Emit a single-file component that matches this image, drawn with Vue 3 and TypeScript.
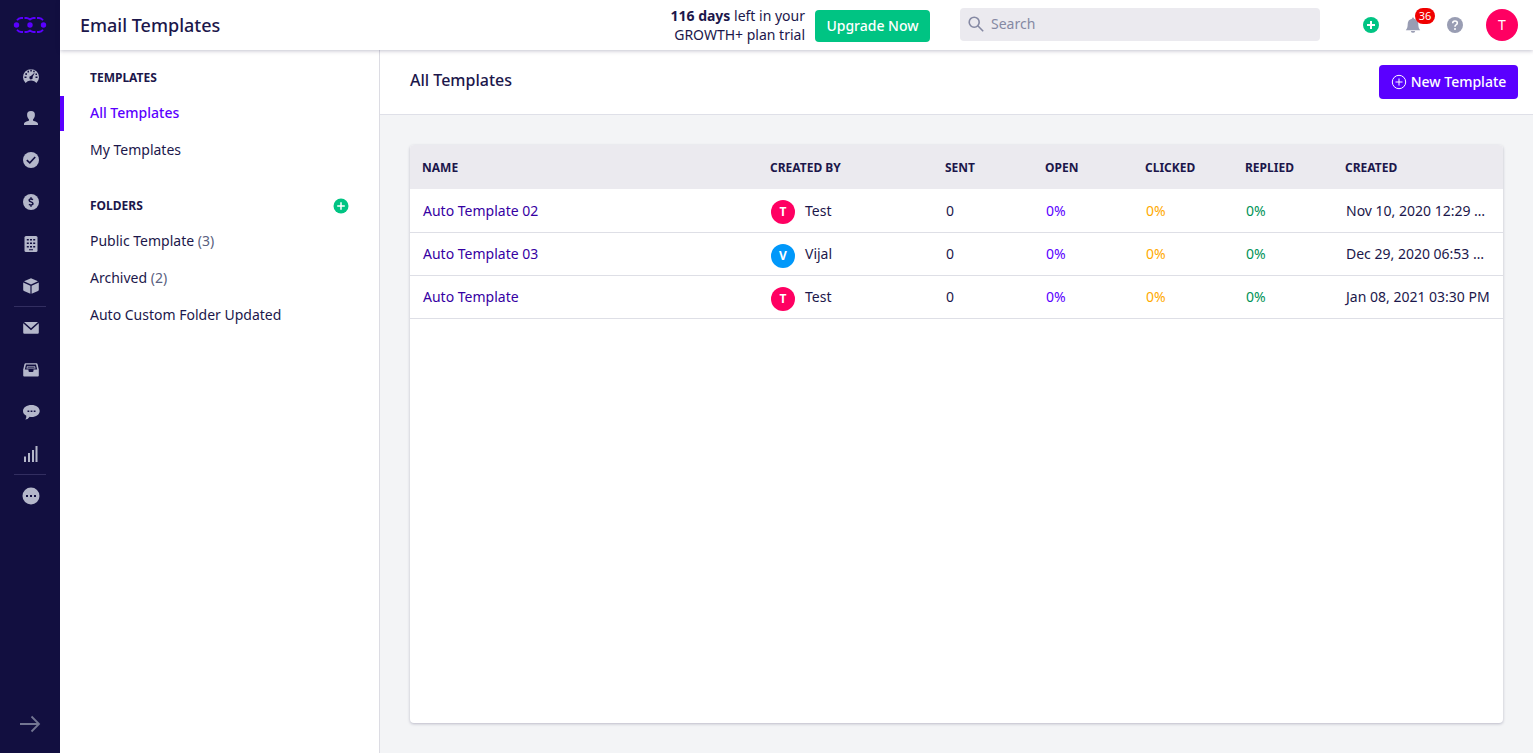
<script setup lang="ts">
import { ref } from 'vue'

interface Row {
  name: string
  initial: string
  owner: string
  tone: 'pink' | 'blue'
  created: string
}

const navItems: { id: string; label: string; divided?: boolean }[] = [
  { id: 'gauge', label: 'Dashboard' },
  { id: 'person', label: 'Contacts' },
  { id: 'check', label: 'Tasks' },
  { id: 'dollar', label: 'Deals' },
  { id: 'building', label: 'Companies' },
  { id: 'box', label: 'Products', divided: true },
  { id: 'mail', label: 'Emails' },
  { id: 'inbox', label: 'Inbox' },
  { id: 'chat', label: 'Conversations' },
  { id: 'chart', label: 'Reports', divided: true },
  { id: 'more', label: 'More' },
]

const folders: { name: string; count?: number }[] = [
  { name: 'Public Template', count: 3 },
  { name: 'Archived', count: 2 },
  { name: 'Auto Custom Folder Updated' },
]

const rows: Row[] = [
  { name: 'Auto Template 02', initial: 'T', owner: 'Test', tone: 'pink', created: 'Nov 10, 2020 12:29 …' },
  { name: 'Auto Template 03', initial: 'V', owner: 'Vijal', tone: 'blue', created: 'Dec 29, 2020 06:53 …' },
  { name: 'Auto Template', initial: 'T', owner: 'Test', tone: 'pink', created: 'Jan 08, 2021 03:30 PM' },
]

const search = ref('')
</script>

<template>
  <div class="app">
    <nav class="rail" aria-label="Main">
      <a class="logo" href="#" aria-label="Home">
        <svg width="34" height="18" viewBox="0 0 34 18" fill="none" stroke="#5a00ff" stroke-width="1.800">
          <path d="M4 4.200Q5.500 2 8 2h2M11.500 2h2q1.500 0 3.500 1.500Q19 2 20.500 2h2M24 2h2q2.500 0 4 2.200M4 13.800Q5.500 16 8 16h2M11.500 16h2q1.500 0 3.500-1.500Q19 16 20.500 16h2M24 16h2q2.500 0 4-2.200" />
          <g fill="#5a00ff" stroke="none"><circle cx="3.500" cy="9" r="2.700" /><circle cx="17" cy="9" r="2.700" /><circle cx="30.500" cy="9" r="2.700" /></g>
        </svg>
      </a>
      <a v-for="item in navItems" :key="item.id" class="rail-item" :class="{ divided: item.divided }" href="#" :aria-label="item.label">
        <svg width="18" height="18" viewBox="0 0 18 18" fill="#b4b7ca">
          <template v-if="item.id === 'gauge'">
            <path d="M3.500 16A8 8 0 1 1 14.500 16L12.300 14.200Q9 12.800 5.700 14.200Z" />
            <g fill="#120f40"><rect x="2.500" y="9.500" width="2" height="1.500" /><rect x="3.300" y="6.200" width="1.700" height="1.700" /><rect x="5.500" y="3.700" width="1.500" height="1.800" /><rect x="8.300" y="2.700" width="1.500" height="1.800" /><rect x="11.200" y="3.700" width="1.500" height="1.500" /><rect x="13.500" y="9.500" width="2" height="1.500" /><rect x="13.500" y="6.500" width="1.500" height="1.500" /><path d="M12.800 5.500L10.600 10a1.700 1.700 0 1 1-1.700-1Z" /></g>
          </template>
          <path v-else-if="item.id === 'person'" d="M9 2C6.300 2 4.900 3.500 5.100 6c.1 2 .8 3.400 1.900 4.400v1.200c-.5.800-4.800.900-5 3.400v.900h14V15c-.2-2.500-4.500-2.600-5-3.400v-1.200c1.100-1 1.800-2.400 1.900-4.400C13.100 3.500 11.700 2 9 2Z" />
          <template v-else-if="item.id === 'check'">
            <circle cx="9" cy="9" r="8" /><path d="M4.800 9.200l3 2.700L13.200 6" fill="none" stroke="#120f40" stroke-width="1.600" />
          </template>
          <template v-else-if="item.id === 'dollar'">
            <circle cx="9" cy="9" r="8" /><path d="M11 6.700Q9.200 5.500 7.900 6.200C6.500 7 7.200 8.400 9 8.900c2 .6 2.600 2.100 1.200 2.800Q8.800 12.400 6.900 11.300M9 4.300v1.700M9 12v1.800" fill="none" stroke="#120f40" stroke-width="1.500" />
          </template>
          <template v-else-if="item.id === 'building'">
            <rect x="2.500" y="1" width="13" height="16" rx="1.500" />
            <path d="M4.800 4h2v1.500h-2zM8 4h2v1.500H8zM11.200 4h2v1.500h-2zM4.800 7.500h2V9h-2zM8 7.500h2V9H8zM11.200 7.500h2V9h-2zM4.800 11h2v1.500h-2zM8 11h2v1.500H8zM11.200 11h2v1.500h-2zM7 14.200h4v1H7z" fill="#120f40" />
          </template>
          <path v-else-if="item.id === 'box'" d="M9 1.200l7 3.100-7 3.300-7-3.300ZM1.200 5.400l7.200 3.400v8l-6.400-2.900q-.8-.4-.8-1.200ZM16.800 5.400L9.600 8.800v8l6.400-2.900q.8-.4.8-1.200Z" />
          <path v-else-if="item.id === 'mail'" d="M2 3h14L9 9.300ZM1.200 4.200L9 11.300l7.800-7.100v9.400q0 1.200-1.200 1.200H2.400q-1.200 0-1.200-1.200Z" />
          <template v-else-if="item.id === 'inbox'">
            <path d="M3.500 2.200h11q.8 0 1 .8l1.300 5.500v6q0 1-1 1H2.200q-1 0-1-1v-6L2.500 3q.2-.8 1-.8Z" /><path d="M4 3.600h10l1.200 5H11.500v1.200q0 1.200-1.200 1.200H7.700q-1.200 0-1.200-1.200V8.600H2.800Z" fill="#120f40" /><path d="M5 5.200h8l.6 2.200H4.400Z" /><path d="M5.500 6.300h7" stroke="#120f40" stroke-width=".8" />
          </template>
          <template v-else-if="item.id === 'chat'">
            <path d="M9.500 2c4.700 0 8.200 2.600 8.200 6s-3.500 6-8.200 6q-1 0-1.800-.2Q6 16.500 3.300 16.500q1.300-1.500 1-3.800Q1 11 1 8c0-3.400 3.700-6 8.500-6Z" /><path d="M5.500 7.500h1.800v1.600H5.500zM8.600 7.500h1.800v1.600H8.600zM11.700 7.500h1.800v1.600h-1.800z" fill="#120f40" />
          </template>
          <path v-else-if="item.id === 'chart'" d="M2 11.500h2V17H2zM6 8h2v9H6zM10 5h2v12h-2zM13.500 1h2v16h-2z" />
          <template v-else>
            <circle cx="9" cy="9" r="8.500" /><path d="M4 8h2v2H4zM8 8h2v2H8zM12 8h2v2h-2z" fill="#120f40" />
          </template>
        </svg>
      </a>
      <button class="expand" type="button" aria-label="Expand menu">
        <svg width="22" height="18" viewBox="0 0 22 18" fill="none" stroke="#737692" stroke-width="1.800"><path d="M1 9h19M12.500 1.500L20 9l-7.500 7.500" /></svg>
      </button>
    </nav>

    <div class="shell">
      <header class="topbar">
        <h1>Email Templates</h1>
        <p class="trial"><strong>116 days</strong> left in your<br />GROWTH+ plan trial</p>
        <button class="upgrade" type="button">Upgrade Now</button>
        <label class="search">
          <svg width="16" height="16" viewBox="0 0 16 16" fill="none" stroke="#8589a3" stroke-width="1.600"><circle cx="6.200" cy="6.200" r="5" /><path d="M9.800 9.800l5.400 5.400" /></svg>
          <input v-model="search" type="search" placeholder="Search" aria-label="Search" />
        </label>
        <div class="tools">
          <button type="button" aria-label="Add">
            <svg width="16" height="16" viewBox="0 0 16 16"><circle cx="8" cy="8" r="8" fill="#00c483" /><path d="M8 4v8M4 8h8" stroke="#fff" stroke-width="2" /></svg>
          </button>
          <button class="bell" type="button" aria-label="Notifications, 36 unread">
            <svg width="16" height="16" viewBox="0 0 16 16" fill="#999db3"><path d="M8 0.500q1 0 1 1.200C11.800 2.300 13.300 4.300 13.300 7c0 3.200.6 4.500 1.900 6.200H.800C2.100 11.500 2.700 10.200 2.700 7c0-2.700 1.500-4.700 4.300-5.300Q7 .5 8 .5ZM5.800 13.900h4.400Q9.800 15.800 8 15.800T5.800 13.900Z" /></svg>
            <span class="badge">36</span>
          </button>
          <button type="button" aria-label="Help">
            <svg width="16" height="16" viewBox="0 0 16 16"><circle cx="8" cy="8" r="8" fill="#999db3" /><path d="M5.700 6.200Q5.700 4 8 4t2.300 2Q10.300 7.200 9 7.900 8 8.400 8 9.700" fill="none" stroke="#fff" stroke-width="1.600" /><circle cx="8" cy="11.900" r="1" fill="#fff" /></svg>
          </button>
        </div>
        <button class="profile" type="button" aria-label="Profile">T</button>
      </header>

      <div class="body">
        <aside class="side">
          <h2>Templates</h2>
          <a class="side-link active" href="#">All Templates</a>
          <a class="side-link" href="#">My Templates</a>
          <div class="folder-head">
            <h2>Folders</h2>
            <button type="button" aria-label="Add folder">
              <svg width="16" height="16" viewBox="0 0 16 16"><circle cx="8" cy="8" r="7.500" fill="#00c483" /><path d="M8 4.200v7.600M4.200 8h7.600" stroke="#fff" stroke-width="1.500" /></svg>
            </button>
          </div>
          <a v-for="folder in folders" :key="folder.name" class="side-link" href="#">{{ folder.name }} <span v-if="folder.count" class="count">({{ folder.count }})</span></a>
        </aside>

        <main class="content">
          <div class="content-head">
            <h2>All Templates</h2>
            <button class="new" type="button">
              <svg width="16" height="16" viewBox="0 0 16 16" fill="none" stroke="#fff"><circle cx="8" cy="8" r="6.700" /><path d="M8 4.500v7M4.500 8h7" /></svg>
              New Template
            </button>
          </div>
          <section class="card">
            <table>
              <colgroup>
                <col /><col class="c-owner" /><col class="c-stat" /><col class="c-stat" /><col class="c-stat" /><col class="c-stat" /><col class="c-date" />
              </colgroup>
              <thead>
                <tr><th>Name</th><th>Created by</th><th>Sent</th><th>Open</th><th>Clicked</th><th>Replied</th><th>Created</th></tr>
              </thead>
              <tbody>
                <tr v-for="row in rows" :key="row.name">
                  <td><a href="#">{{ row.name }}</a></td>
                  <td><div class="owner"><span class="avatar" :class="row.tone">{{ row.initial }}</span>{{ row.owner }}</div></td>
                  <td>0</td>
                  <td class="open">0%</td>
                  <td class="clicked">0%</td>
                  <td class="replied">0%</td>
                  <td>{{ row.created }}</td>
                </tr>
              </tbody>
            </table>
          </section>
        </main>
      </div>
    </div>
  </div>
</template>

<style>
body { margin: 0; }
</style>

<style scoped>
* { box-sizing: border-box; }
.app { display: flex; min-height: 100vh; font: 14px/20px "Noto Sans", "Open Sans", sans-serif; color: #1c174b; background: #fff; }
h1, h2, p { margin: 0; }
a { text-decoration: none; color: inherit; }
button { font: inherit; border: 0; padding: 0; background: none; cursor: pointer; }
svg { display: block; flex: none; }

.rail { flex: none; width: 60px; background: #120f40; display: flex; flex-direction: column; align-items: center; }
.logo { height: 55px; display: flex; align-items: center; padding-bottom: 5px; }
.rail-item { width: 32px; height: 42px; display: flex; align-items: center; justify-content: center; padding-left: 2px; }
.rail-item.divided { border-bottom: 1px solid #322e60; }
.expand { margin-top: auto; margin-bottom: 20px; }

.shell { flex: 1; min-width: 0; display: flex; flex-direction: column; }
.topbar { position: relative; z-index: 1; height: 50px; flex: none; display: flex; align-items: center; padding: 0 15px 0 20px; background: #fff; box-shadow: 0 1px 4px rgba(18, 15, 64, 0.25); }
h1 { font-size: 18px; line-height: 24px; font-weight: 500; }
.trial { margin-left: auto; text-align: right; line-height: 19px; white-space: nowrap; }
.upgrade { width: 115px; height: 32px; margin: 2px 30px 0 10px; border-radius: 4px; background: #00c483; color: #fff; font-weight: 500; white-space: nowrap; }
.search { width: 360px; height: 33px; display: flex; align-items: center; gap: 7px; margin-bottom: 2px; padding: 0 8px; border-radius: 4px; background: #ebeaef; }
.search input { flex: 1; min-width: 0; border: 0; padding: 0; outline: 0; background: none; font: inherit; color: inherit; }
.search input::placeholder { color: #8589a3; opacity: 1; }
.tools { display: flex; gap: 26px; margin: 0 23px 0 43px; }
.bell { position: relative; }
.badge { position: absolute; left: 10px; top: -9px; width: 20px; border-radius: 8px; background: #f00000; color: #fff; font-size: 11px; line-height: 16px; text-align: center; }
.profile { width: 32px; height: 32px; border-radius: 50%; background: #ff0062; color: #fff; }

.body { flex: 1; display: flex; }
.side { flex: none; width: 320px; padding-top: 18px; border-right: 1px solid #dcdce3; }
.side h2 { padding-left: 30px; font-size: 12px; line-height: 20px; font-weight: 700; text-transform: uppercase; }
.side-link { display: block; height: 35px; margin-bottom: 2px; padding-left: 30px; line-height: 34px; }
.side h2 + .side-link { margin-top: 8px; }
.side-link.active { padding-left: 26px; border-left: 4px solid #5a00ff; color: #5a00ff; font-weight: 500; }
.folder-head { display: flex; align-items: center; justify-content: space-between; padding-right: 30px; margin: 28px 0 8px; }
.count { color: #5a5f80; }

.content { flex: 1; min-width: 0; display: flex; flex-direction: column; background: #f3f4f6; }
.content-head { display: flex; align-items: center; justify-content: space-between; height: 65px; padding: 0 15px 0 30px; background: #fff; border-bottom: 1px solid #dfe0e8; }
.content-head h2 { font-size: 16px; line-height: 24px; font-weight: 500; padding-bottom: 4px; }
.new { display: flex; align-items: center; justify-content: center; gap: 4px; width: 139px; height: 34px; border-radius: 4px; background: #5a00ff; color: #fff; font-weight: 500; white-space: nowrap; }
.card { flex: 1; margin: 30px; overflow: hidden; border-radius: 4px; background: #fff; box-shadow: 0 1px 3px rgba(18, 15, 64, 0.25); }
table { width: 100%; table-layout: fixed; border-collapse: separate; border-spacing: 0; }
.c-owner { width: 175px; }
.c-stat { width: 100px; }
.c-date { width: 170px; }
th { height: 44px; padding: 2px 12px 0; background: #ebeaef; text-align: left; text-transform: uppercase; font-size: 12px; font-weight: 700; white-space: nowrap; }
td { height: 43px; padding: 0 13px; border-bottom: 1px solid #dedfe6; white-space: nowrap; }
tbody tr:first-child td { height: 44px; }
td a { color: #3600a3; }
.owner { display: flex; align-items: center; gap: 10px; }
.avatar { width: 24px; height: 24px; margin-top: 3px; border-radius: 50%; color: #fff; font-size: 12px; line-height: 24px; font-weight: 700; text-align: center; }
.pink { background: #ff0062; }
.blue { background: #0098fa; }
.open { color: #5a00ff; }
.clicked { color: #ffaa00; }
.replied { color: #009357; }
</style>
